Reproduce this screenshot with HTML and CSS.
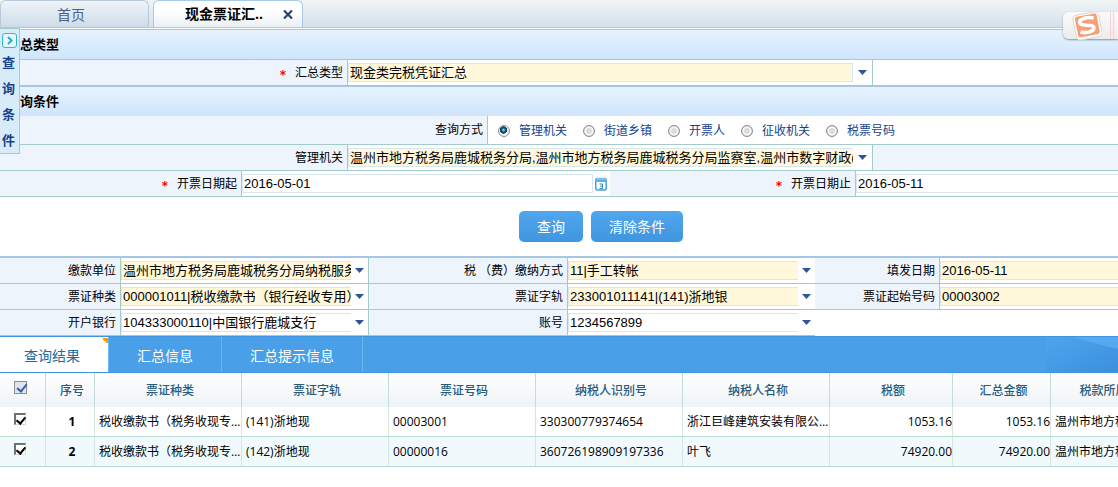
FILE: index.html
```html
<!DOCTYPE html>
<html lang="zh-CN">
<head>
<meta charset="utf-8">
<title>现金票证汇总</title>
<link rel="stylesheet" href="styles.css">
</head>
<body>
<nav class="tabs">
  <button class="tab" type="button"><span>首页</span></button>
  <div class="tab tab-active">
    <span>现金票证汇..</span>
    <button class="tab-close" type="button" aria-label="关闭">
      <svg width="10" height="9" viewBox="0 0 10 9"><path d="M1 .5 9 8.5M9 .5 1 8.5" stroke="#2c4273" stroke-width="2.2"/></svg>
    </button>
  </div>
</nav>

<aside class="side">
  <button class="side-toggle" type="button" aria-label="展开">
    <svg width="15" height="15" viewBox="0 0 15 15"><rect x=".5" y=".5" width="14" height="14" rx="2.5" fill="#e9f8fc" stroke="#2fb9cf"/><path d="M6 4l3.5 3.5L6 11" fill="none" stroke="#1fb0c9" stroke-width="2"/></svg>
  </button>
  <span>查</span><span>询</span><span>条</span><span>件</span>
</aside>

<div class="ime">
  <svg width="30" height="28" viewBox="0 0 30 28">
    <g transform="rotate(-11 15 14)">
      <rect x="2.5" y="1.5" width="26" height="25" rx="4" fill="#fff" stroke="#d8d8d8"/>
      <rect x="4.500" y="3" width="22" height="21" rx="2" fill="#f7a077"/>
      <path d="M23 7.500C18 5 8.500 5 8.500 9.500c0 4.500 13 3 13 7.200 0 4.300-9 4.500-14 2" fill="none" stroke="#fff" stroke-width="3.600"/>
    </g>
  </svg>
  <i class="ime-line"></i>
</div>

<main>
  <form>
    <h2 class="section">汇总类型</h2>
    <div class="row row-one">
      <label class="label" for="sumType"><b class="req">*</b>汇总类型</label>
      <div class="combo combo-full ruled">
        <select id="sumType" class="input required"><option>现金类完税凭证汇总</option></select>
        <svg class="arrow" viewBox="0 0 9 5"><path d="M0 0h9L4.500 5z"/></svg>
      </div>
      <div></div>
    </div>

    <h2 class="section">查询条件</h2>
    <div class="row row-mode">
      <div class="label" id="modeLabel">查询方式</div>
      <div class="radios" role="radiogroup" aria-labelledby="modeLabel">
        <label><input type="radio" name="mode" checked>管理机关</label>
        <label><input type="radio" name="mode">街道乡镇</label>
        <label><input type="radio" name="mode">开票人</label>
        <label><input type="radio" name="mode">征收机关</label>
        <label><input type="radio" name="mode">税票号码</label>
      </div>
    </div>
    <div class="row row-one">
      <label class="label" for="organ">管理机关</label>
      <div class="combo ruled">
        <select id="organ" class="input required"><option>温州市地方税务局鹿城税务分局,温州市地方税务局鹿城税务分局监察室,温州市数字财政(地税)</option></select>
        <svg class="arrow" viewBox="0 0 9 5"><path d="M0 0h9L4.500 5z"/></svg>
      </div>
      <div class="filler"></div>
    </div>
    <div class="row row-dates">
      <label class="label" for="dateFrom"><b class="req">*</b>开票日期起</label>
      <div class="combo combo-full">
        <input id="dateFrom" class="input" type="text" value="2016-05-01">
        <svg class="calendar" width="12" height="14" viewBox="0 0 12 14"><rect x=".75" y="2" width="10.500" height="11" rx="1.500" fill="#fff" stroke="#4a9fd8" stroke-width="1.500"/><path d="M0 1.500h12V5H0z" fill="#5fb0e3"/><path d="M2.500 0v3M5 0v3M7.500 0v3M10 0v3" stroke="#a9d6f2"/><path d="M4.500 7h3v4.500h-3M5 9.200h2" fill="none" stroke="#2e86c4"/></svg>
      </div>
      <label class="label" for="dateTo"><b class="req">*</b>开票日期止</label>
      <div class="combo combo-end"><input id="dateTo" class="input" type="text" value="2016-05-11"></div>
    </div>

    <div class="actions">
      <button class="button" type="button">查询</button>
      <button class="button" type="button">清除条件</button>
    </div>

    <div class="details">
      <div class="row row-three">
        <label class="label" for="payer">缴款单位</label>
        <div class="combo ruled">
          <select id="payer" class="input required"><option>温州市地方税务局鹿城税务分局纳税服务科</option></select>
          <svg class="arrow" viewBox="0 0 9 5"><path d="M0 0h9L4.500 5z"/></svg>
        </div>
        <label class="label" for="payMode">税 （费）缴纳方式</label>
        <div class="combo">
          <select id="payMode" class="input required"><option>11|手工转帐</option></select>
          <svg class="arrow" viewBox="0 0 9 5"><path d="M0 0h9L4.500 5z"/></svg>
        </div>
        <label class="label" for="fillDate">填发日期</label>
        <div class="combo combo-end"><input id="fillDate" class="input required" type="text" value="2016-05-11"></div>
      </div>
      <div class="row row-three">
        <label class="label" for="kind">票证种类</label>
        <div class="combo ruled">
          <select id="kind" class="input required"><option>000001011|税收缴款书（银行经收专用）</option></select>
          <svg class="arrow" viewBox="0 0 9 5"><path d="M0 0h9L4.500 5z"/></svg>
        </div>
        <label class="label" for="track">票证字轨</label>
        <div class="combo">
          <select id="track" class="input required"><option>233001011141|(141)浙地银</option></select>
          <svg class="arrow" viewBox="0 0 9 5"><path d="M0 0h9L4.500 5z"/></svg>
        </div>
        <label class="label" for="startNo">票证起始号码</label>
        <div class="combo combo-end"><input id="startNo" class="input required" type="text" value="00003002"></div>
      </div>
      <div class="row row-three row-last">
        <label class="label" for="bank">开户银行</label>
        <div class="combo ruled">
          <select id="bank" class="input"><option>104333000110|中国银行鹿城支行</option></select>
          <svg class="arrow" viewBox="0 0 9 5"><path d="M0 0h9L4.500 5z"/></svg>
        </div>
        <label class="label" for="account">账号</label>
        <div class="combo">
          <select id="account" class="input"><option>1234567899</option></select>
          <svg class="arrow" viewBox="0 0 9 5"><path d="M0 0h9L4.500 5z"/></svg>
        </div>
      </div>
    </div>
  </form>

  <nav class="result-tabs">
    <button class="result-tab result-tab-active" type="button">查询结果</button>
    <button class="result-tab" type="button">汇总信息</button>
    <button class="result-tab" type="button">汇总提示信息</button>
    <svg class="swoosh" viewBox="0 0 72 36" preserveAspectRatio="none">
      <defs><linearGradient id="sw" x1="0" y1="0" x2="1" y2="1"><stop offset="0" stop-color="#4ea5ed"/><stop offset="1" stop-color="#3b8fdc"/></linearGradient></defs>
      <path d="M0 0h72v36H0z" fill="url(#sw)"/><path d="M26 0h46v12C56 9 42 4 26 0z" fill="#54a9ef"/>
    </svg>
  </nav>

  <div class="grid">
    <table>
      <colgroup><col class="c-check"><col class="c-no"><col class="c-text"><col class="c-text"><col class="c-text"><col class="c-text"><col class="c-text"><col class="c-tax"><col class="c-sum"><col class="c-org"></colgroup>
      <thead>
        <tr><th><input class="check check-all" type="checkbox" checked aria-label="全选"></th><th>序号</th><th>票证种类</th><th>票证字轨</th><th>票证号码</th><th>纳税人识别号</th><th>纳税人名称</th><th>税额</th><th>汇总金额</th><th>税款所属机关</th></tr>
      </thead>
      <tbody>
        <tr><td class="mid"><input class="check" type="checkbox" checked aria-label="选择第1行"></td><td class="mid no">1</td><td>税收缴款书（税务收现专用）</td><td>(141)浙地现</td><td>00003001</td><td>330300779374654</td><td>浙江巨峰建筑安装有限公司温州</td><td class="num">1053.16</td><td class="num">1053.16</td><td>温州市地方税务局</td></tr>
        <tr><td class="mid"><input class="check" type="checkbox" checked aria-label="选择第2行"></td><td class="mid no">2</td><td>税收缴款书（税务收现专用）</td><td>(142)浙地现</td><td>00000016</td><td>360726198909197336</td><td>叶飞</td><td class="num">74920.00</td><td class="num">74920.00</td><td>温州市地方税务局</td></tr>
      </tbody>
    </table>
  </div>
</main>
</body>
</html>
```

FILE: styles.css
```css
* { box-sizing: border-box; }

body {
  margin: 0;
  overflow-x: hidden;
  background: #fff;
  color: #000;
  font: 12px/16px "Open Sans", "Noto Sans CJK SC", sans-serif;
}

button, input, select { font: inherit; margin: 0; }
button { cursor: pointer; }

/* Page tabs */
.tabs {
  display: flex;
  gap: 4px;
  height: 28px;
  border-bottom: 1px solid #a9cbea;
  background: linear-gradient(#f1f5f6, #d3e0ec);
}

.tab {
  display: flex;
  align-items: center;
  width: 149px;
  padding: 2px 0 0 56px;
  border: 1px solid #b9c9dc;
  border-bottom: 0;
  border-radius: 6px 6px 0 0;
  background: linear-gradient(#eff5f7, #cddbe9);
  color: #4a5f85;
  font-size: 14px;
}

.tab-active {
  width: 150px;
  padding: 0 9px 0 31px;
  justify-content: space-between;
  border-color: #a9cbea;
  background: linear-gradient(#fff 40%, #e9f0f4);
  color: #000;
  font-weight: bold;
}

.tab-close, .side-toggle { display: flex; padding: 0; border: 0; background: none; }

/* Collapsed drawer over the form's left edge */
.side {
  position: absolute;
  z-index: 2;
  top: 28px;
  left: 0;
  display: flex;
  flex-direction: column;
  width: 20px;
  height: 126px;
  padding: 4px 2px;
  border: 1px solid #a3cbc8;
  border-left: 0;
  background: #d8ebf9;
  color: #15428b;
  font-size: 13px;
  font-weight: bold;
  line-height: 26px;
}

.side-toggle { margin-bottom: 1px; }

/* Input method bar floating at the right edge */
.ime {
  position: absolute;
  z-index: 2;
  top: 12px;
  right: 0;
  display: flex;
  width: 55px;
  height: 27px;
  padding-left: 9px;
  border-radius: 6px 0 0 6px;
  background: linear-gradient(#fafafa, #ececec);
  box-shadow: 0 1px 2px #8a929c;
}

.ime-line {
  width: 4px;
  height: 27px;
  margin-left: 8px;
  border: 1px solid #f5cfd2;
  border-width: 0 1px;
}

/* Form */
.section {
  height: 31px;
  margin: 0;
  padding-left: 7px;
  border: 1px solid #a6c6e6;
  border-width: 1px 0;
  background: linear-gradient(#e6f3fe, #cfe5fc);
  font-size: 13px;
  line-height: 29px;
}

main { padding-top: 1px; }
.row + .section { height: 30px; border-bottom: 0; }

.row {
  display: grid;
  height: 26px;
  border-bottom: 1px solid #a3cbc8;
}

.row > * { min-width: 0; }
.row-one { grid-template-columns: 348fr 525fr 245fr; }
.row-mode { grid-template-columns: 488fr 630fr; height: 29px; }
.row-dates { grid-template-columns: 242fr 368fr 246fr 262fr; }
.row-three { grid-template-columns: 121fr 248fr 199fr 247fr 125fr 178fr; }

.label {
  display: flex;
  align-items: center;
  justify-content: flex-end;
  padding-right: 4px;
  border-right: 1px solid #a3cbc8;
  background: #edf4fc;
  white-space: nowrap;
}

.req {
  padding-top: 4px;
  margin-right: 9px;
  color: #f00;
  font-family: "DejaVu Sans", sans-serif;
  font-size: 12px;
}

.filler { background: #edf4fc; }

.combo { display: flex; align-items: center; gap: 5px; padding-right: 5px; }
.row-three .combo { gap: 4px; padding-right: 4px; }
.ruled { border-right: 1px solid #a3cbc8; }
.row .combo-end { padding-right: 0; }

.input {
  flex: 1;
  min-width: 0;
  height: 19px;
  padding: 0 0 0 1px;
  border: 1px solid #d7e6f0;
  border-right: 0;
  border-radius: 0;
  outline: 0;
  appearance: none;
  background: #fff;
  color: #000;
  font-family: "Liberation Sans", "Noto Sans CJK SC", sans-serif;
  font-size: 13px;
  line-height: 17px;
  overflow: hidden;
  text-overflow: clip;
  white-space: nowrap;
}

.combo-full .input { border-right: 1px solid #d7e6f0; }
.required { background: #fff8da; }
.arrow { flex: none; width: 9px; height: 5px; fill: #2f5594; }
.row .calendar { flex: none; margin-left: -3px; margin-right: -2px; }

.radios { display: flex; align-items: center; gap: 16px; padding: 1px 0 0 10px; color: #15428b; }
.radios label { display: flex; align-items: center; gap: 9px; white-space: nowrap; }

.radios input {
  appearance: none;
  width: 12px;
  height: 12px;
  border: 1px solid #8c9094;
  border-radius: 50%;
  background: radial-gradient(#dcdcdc 35%, #fff 55%, #c4c4c4 75%);
}

.radios input:checked {
  background: radial-gradient(circle at 45% 40%, #6fd0f5 5%, #1c5c86 25%, #12324f 42%, #f2f2f2 48%);
}

.actions {
  display: flex;
  justify-content: center;
  gap: 8px;
  padding: 14px 0 14px 84px;
}

.button {
  height: 31px;
  padding: 1px 18px 0;
  border: 0;
  border-radius: 5px;
  background: linear-gradient(#50a7ee, #3f95df);
  color: #fff;
  font-size: 14px;
}

.details { border-top: 2px solid #a6c6e6; }
.row-last { border-bottom: 0; }
.row-last > * { border-bottom: 1px solid #a3cbc8; }

/* Results */
.result-tabs {
  display: flex;
  height: 37px;
  border: 1px solid #3f95e2;
  border-width: 1px 0;
  background: #4aa0e8;
}

.result-tab {
  padding: 2px 28px 0;
  border: 0;
  border-right: 1px solid #6cb6f2;
  background: none;
  color: #fff;
  font-size: 14px;
}

.result-tab-active {
  padding-left: 24px;
  background: linear-gradient(45deg, transparent 50%, #f90 50%) right 0 top 1px / 6px 6px no-repeat, #fff;
  color: #1c6a9f;
}

.swoosh { width: 72px; height: 35px; margin-left: auto; }

.grid { overflow: hidden; }

table { width: 1177px; border-collapse: separate; border-spacing: 0; table-layout: fixed; }
.c-check { width: 46px; }
.c-no { width: 49px; }
.c-text { width: 147px; }
.c-tax { width: 123px; }
.c-sum { width: 98px; }
.c-org { width: 126px; }

th {
  height: 34px;
  padding: 1px 1px 0 5px;
  border-right: 1px solid #c2dcd8;
  background: linear-gradient(#fff, #eef3f8);
  color: #285a7c;
  font-weight: 500;
}

td {
  height: 30px;
  padding: 0 0 0 4px;
  border-right: 1px solid #d5e5e0;
  border-bottom: 1px solid #b9d8d4;
  overflow: hidden;
  text-overflow: ellipsis;
  white-space: nowrap;
}

tbody tr:nth-child(2) td { background: #f0fafd; }
.num { text-align: right; }
.mid { text-align: center; }
.no { font-weight: bold; }
th:first-child, td:first-child { padding: 0 5px 6px 0; line-height: 12px; }

.check {
  appearance: none;
  width: 12px;
  height: 12px;
  border: 1px solid #d8d8d8;
  border-top: 2px solid #707070;
  border-left: 2px solid #707070;
  background: #fff;
  vertical-align: middle;
}

.check-all { width: 13px; height: 13px; border: 1px solid #8b8f96; background: #dfe5ee; }

.check:checked::after {
  content: "";
  display: block;
  width: 4px;
  height: 7px;
  margin: 0 0 0 2px;
  border: solid #000;
  border-width: 0 2px 2px 0;
  transform: rotate(40deg);
}

.check-all:checked::after { height: 8px; margin-left: 4px; border-color: #3d5fa5; }
```
